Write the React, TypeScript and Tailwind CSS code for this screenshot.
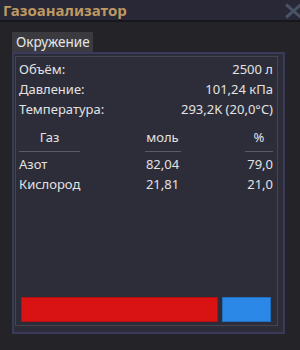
import React from "react";

const gases = [
  { name: "Азот", mol: "82,04", pct: "79,0", color: "bg-[#d91313] border-[#b40f0f]", w: "w-[197px]" },
  { name: "Кислород", mol: "21,81", pct: "21,0", color: "bg-[#2b88e6] border-[#226fc0]", w: "flex-1" },
];

const stats = [
  ["Объём:", "2500 л"],
  ["Давление:", "101,24 кПа"],
  ["Температура:", "293,2K (20,0°C)"],
];

const App = () => {
  return (
    <div
      className="w-[300px] h-[350px] bg-[#232328] flex flex-col overflow-hidden text-[13px] text-[#e2e2e2]"
      style={{ fontFamily: '"Noto Sans", "DejaVu Sans", sans-serif' }}
    >
      {/* title bar */}
      <div className="h-[20px] bg-[#282836] flex items-center justify-between pl-[3px] shrink-0">
        <span className="text-[15px] font-bold text-[#bf9862] leading-none">Газоанализатор</span>
        <svg width="19" height="16" viewBox="0 0 19 16" className="-mr-[3px] mt-[1px] shrink-0">
          <path d="M2 1.5 L17 14.5 M17 1.5 L2 14.5" stroke="#4a5366" strokeWidth="3" />
        </svg>
      </div>
      <div className="h-[2px] bg-[#18181c] shrink-0" />

      <div className="flex-1 flex flex-col pt-[10px] pl-[12px] pr-[15px]">
        <div className="self-start w-[81px] h-[20px] pl-[4px] bg-[#3b3b3f] flex items-center text-[13.5px] text-[#e6e6e6] whitespace-nowrap">
          Окружение
        </div>

        <div className="w-[273px] h-[282px] border-2 border-[#3a3b5b] bg-[#2d2d39] pt-[2px] pl-px pr-[5px] pb-[6px] flex">
          <div className="flex-1 border border-[#45454d] flex flex-col pt-[3px] pl-[3px] pr-[4px] pb-[3px]">
            {stats.map(([k, v]) => (
              <div key={k} className="h-[20px] flex items-center justify-between">
                <span>{k}</span>
                <span>{v}</span>
              </div>
            ))}

            <div className="mt-[7px] grid grid-cols-[61px_36px_28px] justify-between">
              {["Газ", "моль", "%"].map((h) => (
                <div
                  key={h}
                  className="h-[25px] leading-[20px] pb-[4px] text-center border-b border-[#5a5a60]"
                >
                  {h}
                </div>
              ))}
            </div>

            <div className="mt-[3px] flex flex-col">
              {gases.map((g) => (
                <div key={g.name} className="h-[20px] grid grid-cols-[61px_36px_28px] justify-between items-center">
                  <span className="whitespace-nowrap">{g.name}</span>
                  <span className="text-center">{g.mol}</span>
                  <span className="text-right">{g.pct}</span>
                </div>
              ))}
            </div>

            <div className="mt-auto flex gap-[4px] px-[2px]">
              {gases.map((g) => (
                <div key={g.name} className={`h-[25px] border ${g.color} ${g.w}`} />
              ))}
            </div>
          </div>
        </div>
      </div>
    </div>
  );
};

export default App;
